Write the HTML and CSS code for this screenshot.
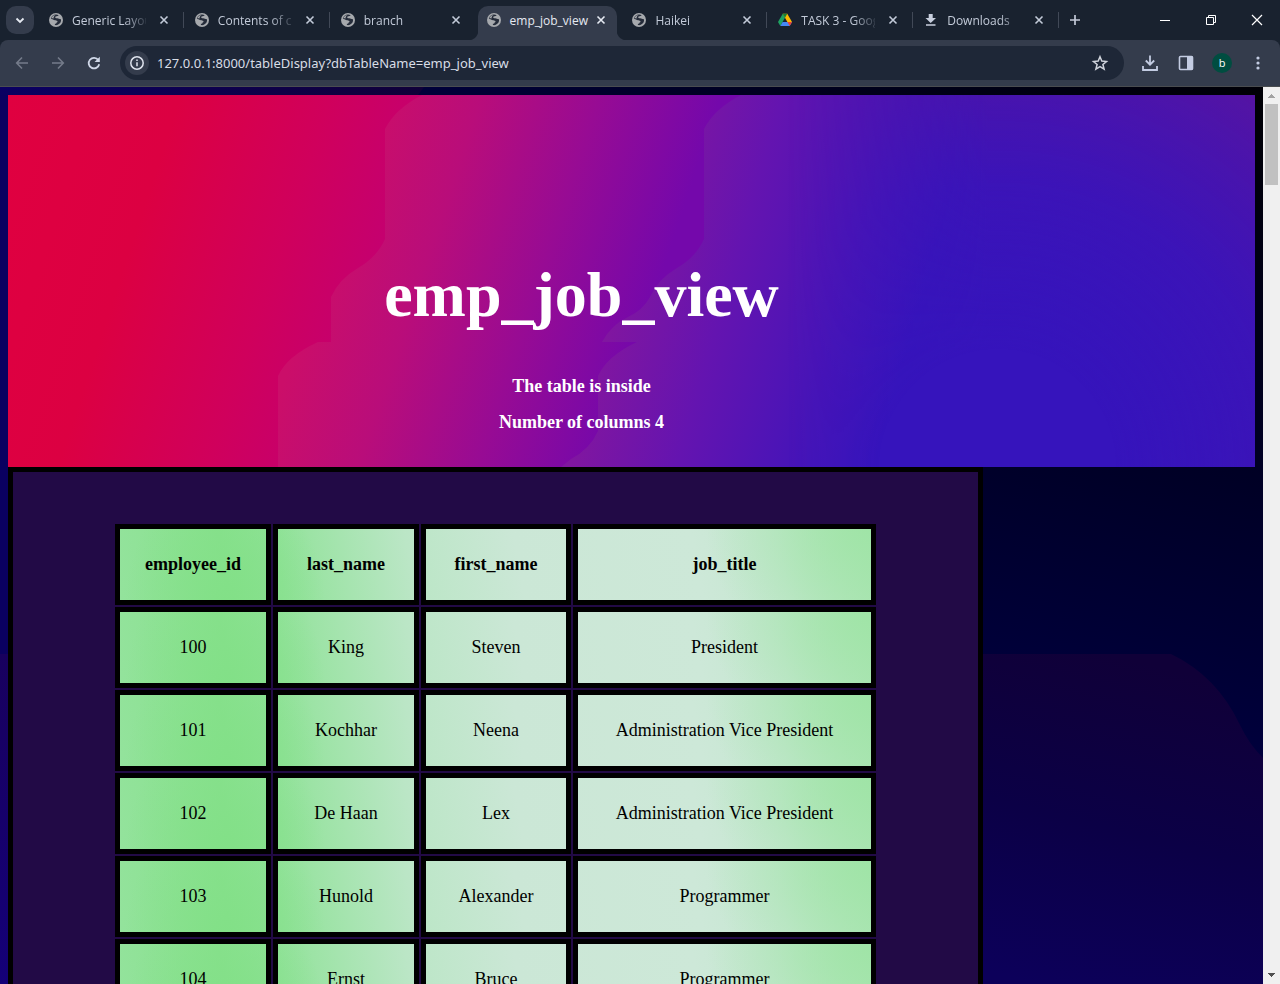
FILE: index.html
```html
<!DOCTYPE html>
<html lang="en">
<head>
<meta charset="utf-8">
<title>emp_job_view</title>
<link rel="stylesheet" href="styles.css">
</head>
<body>
<svg class="defs" aria-hidden="true">
  <symbol id="globe" viewBox="0 0 14 14">
    <circle cx="7" cy="7" r="7" fill="#a6a9ad"/>
    <path d="M9.700 2.200C9.400 3.400 6.300 2.700 6.200 4.200c0 .8.700 1 1.900 1.100 1.700.100 2.100 1 3.900.9.300 2-.4 4-2.400 5.100-1.300.8-2.600 1-3.700.7v-1.300c1.200 0 1.600-.3 1.700-1.200.9-.2 1-.8.8-1.500-1.100-.2-1.400-.7-2.600-.7C4.900 7.200 3.800 5.600 1.900 6 2.200 3.300 4.400 1.600 7 1.600c1 0 1.900.2 2.700.6z" fill="#252c3a"/>
    <path d="M2.800 4.200C4 2.500 5.200 2 6.500 1.900 5 3 4.300 4.200 4.700 5.600c-.9-.4-1.500-.5-2.500-.2zM8.200 3.600c1 .2 2-.2 2.500-.8.500.5 1 1.300 1.200 2.200-1.300.2-2.100-.6-3.600-.7z" fill="#a6a9ad"/>
  </symbol>
  <symbol id="x" viewBox="0 0 16 16"><path d="M4.500 4.500l7 7M11.500 4.500l-7 7" fill="none" stroke="currentColor" stroke-width="1.600"/></symbol>
</svg>

<header class="browser">
  <div class="strip">
    <button class="search" aria-label="Search tabs"><svg width="16" height="16" viewBox="0 0 16 16"><path d="M4.500 6.500L8 10l3.500-3.500" fill="none" stroke="#e6eaf2" stroke-width="1.800"/></svg></button>
    <nav class="tabs" aria-label="Tabs">
      <div class="tab"><svg class="fav"><use href="#globe"/></svg><a class="label" href="#">Generic Layou</a><button class="close" aria-label="Close tab"><svg><use href="#x"/></svg></button></div>
      <div class="tab"><svg class="fav"><use href="#globe"/></svg><a class="label" href="#">Contents of co</a><button class="close" aria-label="Close tab"><svg><use href="#x"/></svg></button></div>
      <div class="tab before"><svg class="fav"><use href="#globe"/></svg><a class="label" href="#">branch</a><button class="close" aria-label="Close tab"><svg><use href="#x"/></svg></button></div>
      <div class="tab active"><svg class="fav"><use href="#globe"/></svg><a class="label" href="#">emp_job_view</a><button class="close" aria-label="Close tab"><svg><use href="#x"/></svg></button></div>
      <div class="tab"><svg class="fav"><use href="#globe"/></svg><a class="label" href="#">Haikei</a><button class="close" aria-label="Close tab"><svg><use href="#x"/></svg></button></div>
      <div class="tab"><svg class="fav" viewBox="0 0 14 14"><path d="M4.700.8L7 4.800 2.300 13 0 9z" fill="#1ea362"/><path d="M4.700.8h4.600L14 9H9.400z" fill="#ffba00"/><path d="M2.300 13l2.300-4H14l-2.300 4z" fill="#4688f4"/><path d="M14 9l-2.300 4L9.400 9z" fill="#ea4335"/><path d="M4.700.8h4.600L7 4.800z" fill="#188038"/></svg><a class="label" href="#">TASK 3 - Goog</a><button class="close" aria-label="Close tab"><svg><use href="#x"/></svg></button></div>
      <div class="tab"><svg class="fav" viewBox="0 0 14 14"><path d="M4.700 1h4v4H12L6.700 10 1.500 5h3.200zM2 11.200h9.500v1.600H2z" fill="#c7cedd"/></svg><a class="label" href="#">Downloads</a><button class="close" aria-label="Close tab"><svg><use href="#x"/></svg></button></div>
    </nav>
    <button class="newtab" aria-label="New tab"><svg width="12" height="12" viewBox="0 0 12 12"><path d="M6 1v10M1 6h10" stroke="#c3c9d8" stroke-width="1.700"/></svg></button>
    <div class="window">
      <button aria-label="Minimize"><svg width="12" height="12"><path d="M1 6.500h10" stroke="#fff"/></svg></button>
      <button aria-label="Restore"><svg width="12" height="12"><path d="M1.500 3.500h7v7h-7zM3.500 3.500v-2h7v7h-2" fill="none" stroke="#fff"/></svg></button>
      <button aria-label="Close"><svg width="12" height="12"><path d="M1 1l10 10M11 1L1 11" stroke="#fff" stroke-width="1.200"/></svg></button>
    </div>
  </div>
  <div class="toolbar">
    <button class="tool" aria-label="Back"><svg width="16" height="16" viewBox="0 0 16 16"><path d="M14 8H3M8 2.500L2.700 8 8 13.500" fill="none" stroke="#747b8a" stroke-width="1.600"/></svg></button>
    <button class="tool" aria-label="Forward"><svg width="16" height="16" viewBox="0 0 16 16"><path d="M2 8h11M8 2.500L13.300 8 8 13.500" fill="none" stroke="#747b8a" stroke-width="1.600"/></svg></button>
    <button class="tool" aria-label="Reload"><svg width="16" height="16" viewBox="0 0 16 16"><path d="M13.200 9.200A5.300 5.300 0 1 1 12.300 5" fill="none" stroke="#d0d8e8" stroke-width="1.800"/><path d="M13.800 1.800V7H8.600z" fill="#d0d8e8"/></svg></button>
    <form class="address">
      <button type="button" class="info" aria-label="Site information"><svg width="16" height="16" viewBox="0 0 16 16"><circle cx="8" cy="8" r="6.200" fill="none" stroke="#dfe4ee" stroke-width="1.500"/><path d="M8 7.200v4M8 4.500v1.500" stroke="#dfe4ee" stroke-width="1.500"/></svg></button>
      <label class="url"><span class="hidden">Address</span><input type="text" value="127.0.0.1:8000/tableDisplay?dbTableName=emp_job_view"></label>
      <button type="button" class="star" aria-label="Bookmark this tab"><svg width="18" height="18" viewBox="0 0 18 18"><path d="M9 2.800l1.800 4.300 4.700.4-3.600 3 1.200 4.600L9 12.600l-4.100 2.500 1.200-4.600-3.600-3 4.700-.4z" fill="none" stroke="#d0d4dc" stroke-width="1.500"/></svg></button>
    </form>
    <button class="tool" aria-label="Downloads"><svg width="18" height="18" viewBox="0 0 18 18"><path d="M9 1.500v9M4.800 6.500L9 10.700l4.200-4.200M2 12v4h14v-4" fill="none" stroke="#c3cce2" stroke-width="1.800"/></svg></button>
    <button class="tool" aria-label="Side panel"><svg width="16" height="16" viewBox="0 0 16 16"><rect x="1.500" y="1.500" width="13" height="13" rx="1" fill="none" stroke="#c3cce2" stroke-width="1.600"/><path d="M9 1.500h6v13H9z" fill="#c3cce2"/></svg></button>
    <button class="tool" aria-label="Profile"><span class="avatar">b</span></button>
    <button class="tool" aria-label="Menu"><svg width="16" height="16" viewBox="0 0 16 16" fill="#c3cce2"><circle cx="8" cy="3" r="1.600"/><circle cx="8" cy="8" r="1.600"/><circle cx="8" cy="13" r="1.600"/></svg></button>
  </div>
</header>

<div class="viewport">
  <main class="page">
    <svg class="backdrop" viewBox="0 0 1263 897" preserveAspectRatio="none" aria-hidden="true">
      <defs>
        <linearGradient id="night" gradientUnits="userSpaceOnUse" x1="1263" y1="0" x2="1100" y2="650"><stop offset="0" stop-color="#000004"/><stop offset=".3" stop-color="#000016"/><stop offset=".62" stop-color="#000028"/><stop offset="1" stop-color="#00003e"/></linearGradient>
        <linearGradient id="topedge"><stop offset="0" stop-color="#0a0062"/><stop offset="1" stop-color="#100038"/></linearGradient>
        <linearGradient id="topnight"><stop offset="0" stop-color="#00003a"/><stop offset=".4" stop-color="#000020"/><stop offset="1" stop-color="#000006"/></linearGradient>
        <linearGradient id="dusk" gradientUnits="userSpaceOnUse" x1="1120" y1="570" x2="1040" y2="897"><stop offset="0" stop-color="#100038"/><stop offset=".5" stop-color="#0b0046"/><stop offset="1" stop-color="#0c005a"/></linearGradient>
        <linearGradient id="leftlow" x2="0" y2="1"><stop offset="0" stop-color="#18005e"/><stop offset="1" stop-color="#140078"/></linearGradient>
      </defs>
      <path d="M0 0h1263v897H0z" fill="url(#night)"/>
      <path d="M418 0h845v8H418z" fill="url(#topnight)"/>
      <path d="M0 0h424l-6 8H0z" fill="url(#topedge)"/>
      <path d="M0 8h8v559H0z" fill="#0a0060"/>
      <path d="M0 567h8v330H0z" fill="url(#leftlow)"/>
      <path d="M975 567h196q46 22 69 71 9 19 23 33v226H975z" fill="url(#dusk)"/>
    </svg>
    <section class="banner">
      <svg class="backdrop" viewBox="0 0 1247 372" preserveAspectRatio="none" aria-hidden="true">
        <defs>
          <linearGradient id="red" gradientUnits="userSpaceOnUse" x1="0" y1="0" x2="388" y2="128"><stop offset="0" stop-color="#e00040"/><stop offset=".4" stop-color="#dc0042"/><stop offset=".75" stop-color="#d0005c"/><stop offset="1" stop-color="#c40070"/></linearGradient>
          <linearGradient id="pink" gradientUnits="userSpaceOnUse" x1="350" y1="60" x2="660" y2="162"><stop offset="0" stop-color="#cb0e69"/><stop offset=".3" stop-color="#b90d7a"/><stop offset=".65" stop-color="#970b94"/><stop offset="1" stop-color="#7408ab"/></linearGradient>
          <linearGradient id="violet" gradientUnits="userSpaceOnUse" x1="640" y1="100" x2="920" y2="180"><stop offset="0" stop-color="#8016a0"/><stop offset=".35" stop-color="#6414b0"/><stop offset=".75" stop-color="#4614b8"/><stop offset="1" stop-color="#3614bc"/></linearGradient>
          <radialGradient id="glow" gradientUnits="userSpaceOnUse" cx="990" cy="372" r="470"><stop offset=".25" stop-color="#3a14b8" stop-opacity="0"/><stop offset=".6" stop-color="#3e14b6" stop-opacity=".7"/><stop offset="1" stop-color="#5814a0"/></radialGradient>
          <linearGradient id="fade" gradientUnits="userSpaceOnUse" x1="780" y1="0" x2="980" y2="0"><stop offset="0" stop-color="#000"/><stop offset="1" stop-color="#fff"/></linearGradient>
          <mask id="right"><path d="M700 0h547v372H700z" fill="url(#fade)"/></mask>
        </defs>
        <path d="M0 0h1247v372H0z" fill="url(#red)"/>
        <path d="M414 0Q387 14 377 34V144Q369 162 350 173 331 184 323 202V247H310Q279 261 270 281V372H1247V0z" fill="url(#pink)"/>
        <path d="M733 0Q706 14 696 34V144Q688 162 669 173 650 184 642 202 635 215 620 222 603 230 594 247H629Q599 261 590 281V336Q582 354 563 364L553 372H1247V0z" fill="url(#violet)"/>
        <path d="M700 0h547v372H700z" fill="url(#glow)" mask="url(#right)"/>
      </svg>
      <div class="intro">
        <h1>emp_job_view</h1>
        <h4>The table is inside</h4>
        <h4>Number of columns 4</h4>
      </div>
    </section>
    <table class="data">
      <colgroup><col class="c1"><col class="c2"><col class="c3"><col class="c4"></colgroup>
      <tbody>
      <tr><th scope="col">employee_id</th><th scope="col">last_name</th><th scope="col">first_name</th><th scope="col">job_title</th></tr>
      <tr><td>100</td><td>King</td><td>Steven</td><td>President</td></tr>
      <tr><td>101</td><td>Kochhar</td><td>Neena</td><td>Administration Vice President</td></tr>
      <tr><td>102</td><td>De Haan</td><td>Lex</td><td>Administration Vice President</td></tr>
      <tr><td>103</td><td>Hunold</td><td>Alexander</td><td>Programmer</td></tr>
      <tr><td>104</td><td>Ernst</td><td>Bruce</td><td>Programmer</td></tr>
      </tbody>
    </table>
  </main>
  <div class="scrollbar" aria-hidden="true">
    <svg width="17" height="17"><path d="M5 11h7v-1h-1V9h-1V8H9V7H8v1H7v1H6v1H5z" fill="#a3a3a3"/></svg>
    <div class="thumb"></div>
    <svg class="down" width="17" height="17"><path d="M5 6h7v1h-1v1h-1v1H9v1H8V9H7V8H6V7H5z" fill="#505050"/></svg>
  </div>
</div>
</body>
</html>
```

FILE: styles.css
```css
* { box-sizing: border-box; }

body {
  margin: 0;
  height: 100vh;
  display: flex;
  flex-direction: column;
  overflow: hidden;
  background: #000020;
}

button {
  display: flex;
  align-items: center;
  justify-content: center;
  padding: 0;
  border: 0;
  background: none;
  color: inherit;
  font: inherit;
}

.defs, .hidden { position: absolute; width: 0; height: 0; overflow: hidden; }

/* Browser window */
.browser {
  flex: none;
  background: #19222f;
  color: #c3cbd9;
  font: 12px/16px "Open Sans", "Noto Sans", sans-serif;
}

.strip { display: flex; height: 40px; align-items: center; padding-left: 6px; }

.search { flex: none; width: 28px; height: 28px; margin-right: 4px; border-radius: 10px; background: #343c4c; }

.tabs { display: flex; flex: 0 1 1021px; min-width: 0; height: 40px; }

.tab {
  position: relative;
  z-index: 0;
  flex: 1 1 146px;
  min-width: 0;
  display: flex;
  align-items: center;
  padding-left: 11px;
}

.tab::after { content: ""; flex: none; width: 1px; height: 16px; margin-left: 11px; background: #414957; }
.tab.before::after { background: none; }

.fav { flex: none; width: 14px; height: 14px; margin-right: 9px; }

.label {
  flex: 1;
  min-width: 0;
  margin-right: 10px;
  padding-top: 1px;
  white-space: nowrap;
  color: inherit;
  text-decoration: none;
  -webkit-mask-image: linear-gradient(90deg, #000 52px, transparent 78px);
  mask-image: linear-gradient(90deg, #000 52px, transparent 78px);
}

.close { flex: none; width: 16px; height: 16px; }
.close svg { width: 16px; height: 16px; }

.active { padding-right: 12px; color: #e6eaf2; }
.active .label { -webkit-mask-image: none; mask-image: none; }

.active::before {
  content: "";
  position: absolute;
  z-index: -1;
  inset: 6px 4px 0 2px;
  border-radius: 10px 10px 0 0;
  background: #343c4c;
}

.active::after {
  position: absolute;
  z-index: -1;
  left: -8px;
  right: -6px;
  bottom: 0;
  width: auto;
  height: 10px;
  margin: 0;
  background:
    radial-gradient(circle at 0 0, transparent 10px, #343c4c 11px) left / 10px 10px no-repeat,
    radial-gradient(circle at 100% 0, transparent 10px, #343c4c 11px) right / 10px 10px no-repeat;
}

.newtab { flex: none; width: 28px; height: 28px; margin-left: 2px; }

.window { display: flex; margin-left: auto; }
.window button { width: 46px; height: 40px; }

.toolbar {
  display: flex;
  align-items: center;
  height: 47px;
  padding: 0 4px;
  border-bottom: 1px solid #4a4d50;
  border-radius: 8px 8px 0 0;
  background: #343c4c;
}

.tool { flex: none; width: 36px; height: 34px; }

.address {
  flex: 1;
  min-width: 0;
  display: flex;
  align-items: center;
  height: 34px;
  margin: 0 8px;
  padding: 0 12px 0 5px;
  border-radius: 17px;
  background: #1e2737;
}

.info { flex: none; width: 24px; height: 24px; border-radius: 50%; background: #343c4c; }
.url { flex: 1; display: flex; margin-left: 8px; }

.url input {
  width: 100%;
  padding: 0;
  border: 0;
  outline: 0;
  background: none;
  color: #d8dde6;
  font: 13px/18px "Noto Sans", "Open Sans", sans-serif;
}

.star { flex: none; width: 24px; height: 24px; }

.avatar {
  width: 20px;
  border-radius: 50%;
  background: #004d40;
  color: #fff;
  font-size: 11px;
  line-height: 20px;
}

/* Page */
.viewport { flex: 1; min-height: 0; display: flex; }

.page {
  position: relative;
  z-index: 0;
  flex: 1;
  min-width: 0;
  padding: 8px;
  overflow: hidden;
  font: 18px/21px "Liberation Serif", "Times New Roman", serif;
}

.backdrop { position: absolute; z-index: -1; inset: 0; width: 100%; height: 100%; }

.banner {
  position: relative;
  z-index: 0;
  padding: 163px 100px 34px 0;
  color: #fff;
  text-align: center;
}

.banner h1 { margin: 0 0 44px; font-size: 64px; line-height: 74px; }
.banner h4 { margin: 15px 0 0; font-size: 18px; }

.data {
  padding: 50px 100px;
  border: 5px solid #000;
  border-collapse: separate;
  border-spacing: 2px;
  background: #220a46;
  color: #000;
  text-align: center;
}

.c1 { width: 156px; }
.c2 { width: 146px; }
.c3 { width: 150px; }
.c4 { width: 303px; }

.data tr {
  background:
    radial-gradient(ellipse 170px 150px at 100% 0, #9fe4a6, transparent),
    radial-gradient(ellipse 100px 130px at 110px 100%, #82e087, transparent),
    linear-gradient(80deg, #94e39d 0, #88e08d 15%, #90e298 22%, #bbe6c6 39%, #cbe7d6 53%, #cde8d8 76%, #c4e7cf 87%, #ace5b4 100%);
}

.data th, .data td { padding: 25px; border: 5px solid #000; }

.scrollbar {
  flex: none;
  display: flex;
  flex-direction: column;
  width: 17px;
  background: #f0f0f0;
}

.scrollbar svg { flex: none; }
.thumb { height: 81px; margin: 0 2px; background: #c1c1c1; }
.down { margin-top: auto; }
```
